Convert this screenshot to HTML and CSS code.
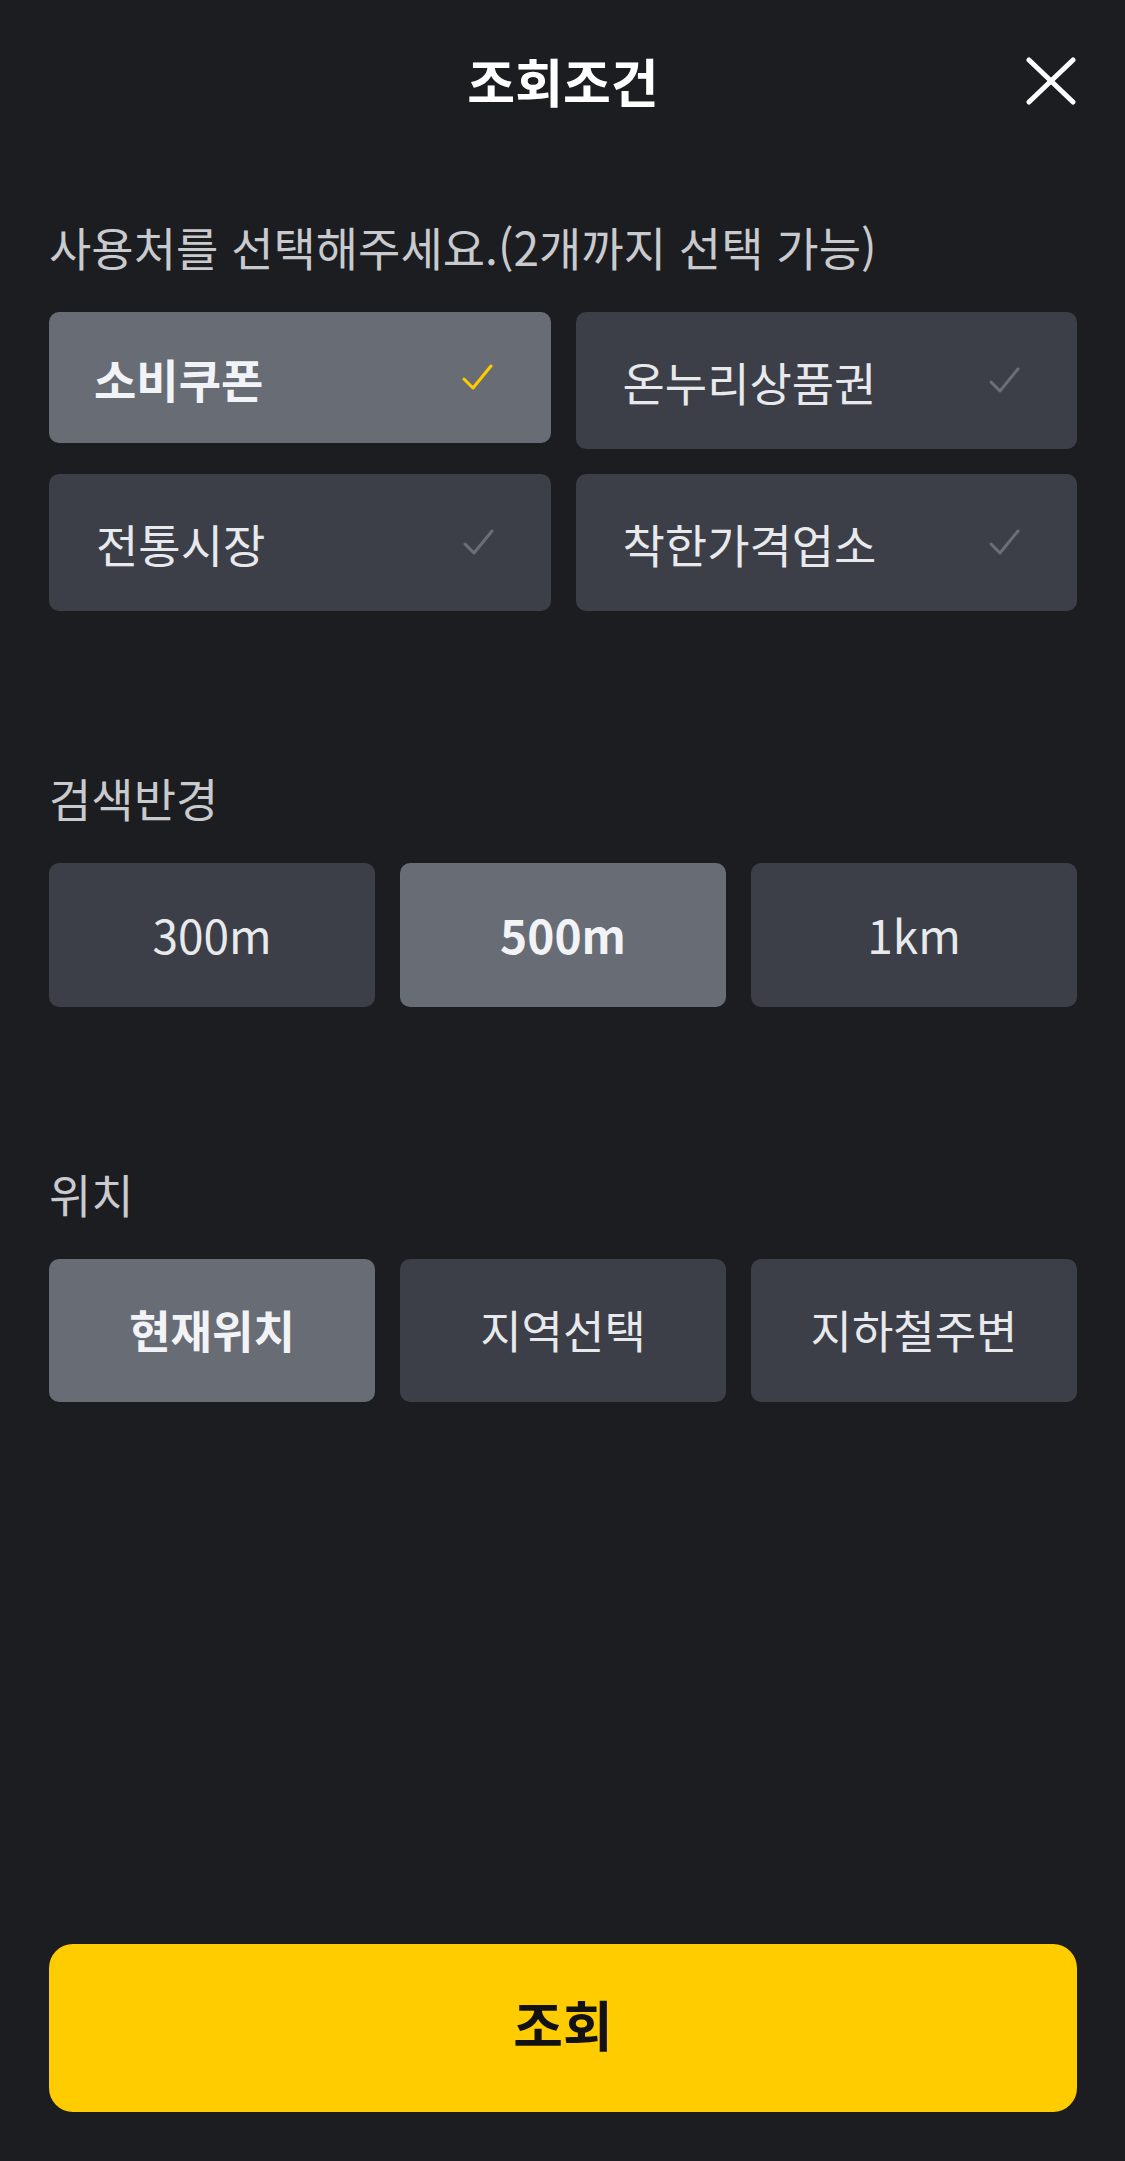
FILE: index.html
```html
<!DOCTYPE html>
<html lang="ko">
<head>
    <meta charset="UTF-8">
    <meta name="viewport" content="width=device-width, initial-scale=1.0">
    <title>조회조건</title>
    <link rel="stylesheet" href="styles.css">
</head>
<body>
    <div class="page">
        <header class="header">
            <span></span>
            <h1>조회조건</h1>
            <button class="close" type="button" aria-label="닫기">
                <svg width="50" height="48" viewBox="0 0 50 48">
                    <line x1="3" y1="3" x2="47" y2="45" />
                    <line x1="47" y1="3" x2="3" y2="45" />
                </svg>
            </button>
        </header>

        <section class="section first">
            <p class="section-title">사용처를 선택해주세요.(2개까지 선택 가능)</p>
            <div class="place-grid">
                <button class="place on" type="button">
                    <span>소비쿠폰</span>
                    <svg class="check" width="32" height="27" viewBox="0 0 32 27"><polyline points="2,15 11,24 29,2" /></svg>
                </button>
                <button class="place" type="button">
                    <span>온누리상품권</span>
                    <svg class="check" width="32" height="27" viewBox="0 0 32 27"><polyline points="2,15 11,24 29,2" /></svg>
                </button>
                <button class="place" type="button">
                    <span>전통시장</span>
                    <svg class="check" width="32" height="27" viewBox="0 0 32 27"><polyline points="2,15 11,24 29,2" /></svg>
                </button>
                <button class="place" type="button">
                    <span>착한가격업소</span>
                    <svg class="check" width="32" height="27" viewBox="0 0 32 27"><polyline points="2,15 11,24 29,2" /></svg>
                </button>
            </div>
        </section>

        <section class="section">
            <p class="section-title">검색반경</p>
            <div class="option-row">
                <button class="opt num" type="button">300m</button>
                <button class="opt num on" type="button">500m</button>
                <button class="opt num" type="button">1km</button>
            </div>
        </section>

        <section class="section">
            <p class="section-title">위치</p>
            <div class="option-row loc">
                <button class="opt on" type="button">현재위치</button>
                <button class="opt" type="button">지역선택</button>
                <button class="opt" type="button">지하철주변</button>
            </div>
        </section>

        <footer class="footer">
            <button class="search" type="button">조회</button>
        </footer>
    </div>
</body>
</html>
```

FILE: styles.css
```css
body {
    margin: 0;
    padding: 0;
    background: #1c1d21;
    font-family: "Noto Sans CJK KR", "Noto Sans", sans-serif;
    color: #e8e9ec;
}
button {
    font-family: inherit;
    border: none;
    cursor: pointer;
}
.page {
    height: 100vh;
    box-sizing: border-box;
    padding: 0 48px 49px 49px;
    display: flex;
    flex-direction: column;
}
.header {
    height: 166px;
    box-sizing: border-box;
    padding-bottom: 5px;
    display: grid;
    grid-template-columns: 1fr auto 1fr;
    align-items: center;
}
.header h1 {
    margin: 0;
    font-size: 52px;
    font-weight: 700;
    color: #ffffff;
}
.close {
    justify-self: end;
    background: none;
    padding: 0;
    margin-right: 1px;
    display: flex;
}
.close line {
    stroke: #ffffff;
    stroke-width: 5;
    stroke-linecap: round;
}
.section {
    margin-top: 157px;
}
.section.first {
    margin-top: 51px;
}
.section-title {
    margin: 0 0 37px;
    font-size: 46px;
    line-height: 58px;
    color: #c9cacd;
}
.place-grid {
    display: grid;
    grid-template-columns: 1fr 1fr;
    gap: 25px;
    align-items: start;
}
.place {
    height: 137px;
    padding: 0 56px 0 47px;
    border-radius: 10px;
    background: #3c3f47;
    color: #e8e9ec;
    font-size: 46px;
    display: flex;
    align-items: center;
    justify-content: space-between;
}
.place .check polyline {
    fill: none;
    stroke: #6b6e76;
    stroke-width: 3;
    stroke-linecap: round;
    stroke-linejoin: round;
}
.place.on {
    height: 131px;
    padding-left: 45px;
    padding-right: 57px;
    background: #686c75;
    color: #f2f3f7;
    font-weight: 700;
}
.place.on .check polyline {
    stroke: #ffcc00;
}
.option-row {
    display: grid;
    grid-template-columns: repeat(3, 1fr);
    gap: 25px;
}
.opt {
    height: 144px;
    border-radius: 10px;
    background: #3c3f47;
    color: #e8e9ec;
    font-size: 45px;
    padding: 0 0 2px;
}
.opt.num {
    font-size: 46px;
}
.opt.on {
    background: #686c75;
    color: #f2f3f7;
    font-weight: 700;
}
.loc .opt {
    height: 143px;
}
.footer {
    margin-top: auto;
}
.search {
    width: 100%;
    height: 168px;
    padding: 0 0 10px;
    border-radius: 24px;
    background: #ffcc00;
    color: #121212;
    font-size: 54px;
    font-weight: 700;
}
```
